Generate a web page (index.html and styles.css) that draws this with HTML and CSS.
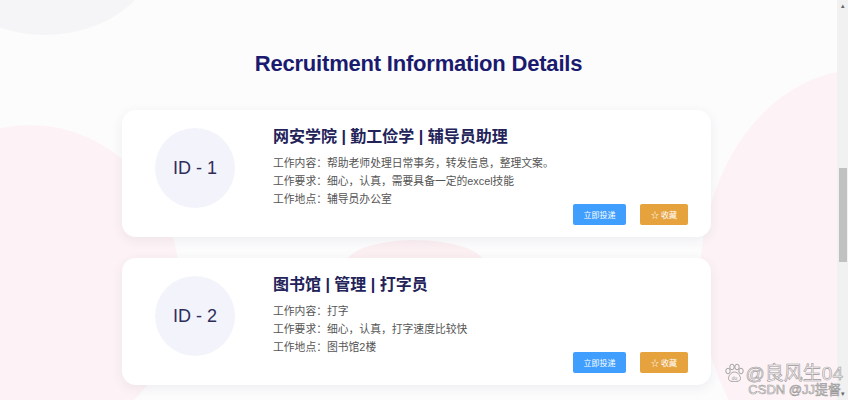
FILE: index.html
```html
<!DOCTYPE html>
<html lang="zh-CN">
<head>
    <meta charset="UTF-8">
    <meta name="viewport" content="width=device-width, initial-scale=1.0">
    <title>Recruitment Information Details</title>
    <link rel="stylesheet" href="styles.css">
</head>
<body>

    <div class="frame">
        <div class="page">
            <!-- фон -->
            <div class="blob blob-gray"></div>
            <div class="blob blob-left"></div>
            <div class="blob blob-mid"></div>
            <div class="blob blob-right"></div>

            <h2>Recruitment Information Details</h2>

            <div class="list">
                <div class="job-card">
                    <div class="job-id">ID - 1</div>
                    <div class="job-info">
                        <h3>网安学院 | 勤工俭学 | 辅导员助理</h3>
                        <p>工作内容：帮助老师处理日常事务，转发信息，整理文案。</p>
                        <p>工作要求：细心，认真，需要具备一定的excel技能</p>
                        <p>工作地点：辅导员办公室</p>
                    </div>
                    <div class="actions">
                        <button class="btn btn-apply">立即投递</button>
                        <button class="btn btn-fav">☆ 收藏</button>
                    </div>
                </div>

                <div class="job-card">
                    <div class="job-id">ID - 2</div>
                    <div class="job-info">
                        <h3>图书馆 | 管理 | 打字员</h3>
                        <p>工作内容：打字</p>
                        <p>工作要求：细心，认真，打字速度比较快</p>
                        <p>工作地点：图书馆2楼</p>
                    </div>
                    <div class="actions">
                        <button class="btn btn-apply">立即投递</button>
                        <button class="btn btn-fav">☆ 收藏</button>
                    </div>
                </div>
            </div>
        </div>

        <div class="scrollbar">
            <span class="arrow">▴</span>
            <div class="thumb"></div>
            <span class="arrow">▾</span>
        </div>
        <div class="edge"></div>

        <!-- водяний знак -->
        <div class="watermark">
            <div class="wm-main">
                <svg class="paw" width="20" height="20" viewBox="0 0 20 20" fill="none" stroke="#999" stroke-width="0.9">
                    <ellipse cx="4" cy="8" rx="2.2" ry="2.8"/>
                    <ellipse cx="8" cy="4" rx="2.2" ry="2.8"/>
                    <ellipse cx="13" cy="4" rx="2.2" ry="2.8"/>
                    <ellipse cx="17" cy="8" rx="2.2" ry="2.8"/>
                    <path d="M10.5 9 C7 9 4.5 13 4.5 15.5 C4.5 18 7 18.5 10.5 18.5 C14 18.5 16.5 18 16.5 15.5 C16.5 13 14 9 10.5 9 Z"/>
                    <text x="10.5" y="16.8" font-size="5" text-anchor="middle" fill="#999" stroke="none" font-family="Liberation Sans, sans-serif">du</text>
                </svg>
                <span>@良风生04</span>
            </div>
            <span class="wm-sub">CSDN @JJ提督</span>
        </div>
    </div>

</body>
</html>
```

FILE: styles.css
```css
body {
    margin: 0;
    font-family: "Liberation Sans", Arial, "Noto Sans CJK SC", sans-serif;
    background-color: #fff;
}

.frame {
    position: relative;
    display: grid;
    grid-template-columns: 837px 11px 8px;
    height: 400px;
    overflow: hidden;
}

.page {
    position: relative;
    overflow: hidden;
    background-color: #fcfcfd;
}

.blob {
    position: absolute;
    border-radius: 50%;
    z-index: 0;
}

.blob-gray {
    left: -70px;
    top: -150px;
    width: 230px;
    height: 185px;
    background-color: #f5f5f7;
}

.blob-left {
    left: -120px;
    top: 125px;
    width: 300px;
    height: 320px;
    background-color: #fdf3f6;
}

.blob-mid {
    left: 345px;
    top: 240px;
    width: 140px;
    height: 50px;
    background-color: #fbeff2;
}

.blob-right {
    left: 700px;
    top: 70px;
    width: 320px;
    height: 420px;
    background-color: #fdf3f6;
}

h2 {
    position: relative;
    z-index: 1;
    margin: 0;
    padding-top: 51px;
    text-align: center;
    font-size: 22px;
    line-height: 26px;
    color: #1a1a6e;
    letter-spacing: -0.2px;
}

.list {
    position: relative;
    z-index: 1;
    display: flex;
    flex-direction: column;
    gap: 21px;
    width: 589px;
    margin: 33px 0 0 122px;
}

.job-card {
    display: flex;
    align-items: flex-start;
    height: 127px;
    box-sizing: border-box;
    padding: 18px 23px 12px 33px;
    background-color: #fff;
    border-radius: 14px;
    box-shadow: 0 3px 12px rgba(60, 60, 90, 0.08);
}

.job-id {
    flex: none;
    width: 80px;
    height: 80px;
    border-radius: 50%;
    background-color: #f3f3fb;
    color: #2d2d5a;
    font-size: 18px;
    display: flex;
    align-items: center;
    justify-content: center;
}

.job-info {
    margin-left: 38px;
    flex: 1;
}

.job-info h3 {
    margin: -2px 0 6px;
    font-size: 16px;
    line-height: 22px;
    color: #23235a;
    font-weight: bold;
}

.job-info p {
    margin: 0;
    font-size: 10.8px;
    line-height: 18px;
    color: #555;
}

.actions {
    align-self: flex-end;
    display: flex;
    gap: 14px;
}

.btn {
    height: 21px;
    padding: 0 10px;
    border: none;
    border-radius: 2px;
    color: #fff;
    font-size: 8px;
    font-family: inherit;
}

.btn-apply {
    width: 53px;
    background-color: #409eff;
}

.btn-fav {
    width: 48px;
    background-color: #e6a23c;
}

.watermark {
    position: absolute;
    right: 13px;
    bottom: 4px;
    z-index: 2;
    display: flex;
    flex-direction: column;
    align-items: flex-end;
    color: transparent;
    -webkit-text-stroke: 0.6px #999;
    line-height: 1;
}

.wm-main {
    display: flex;
    align-items: center;
    gap: 2px;
    font-size: 19px;
}

.wm-sub {
    font-size: 13px;
    margin-right: 2px;
}

.scrollbar {
    display: flex;
    flex-direction: column;
    align-items: center;
    background-color: #f1f1f1;
    padding-top: 168px;
    position: relative;
}

.scrollbar .arrow {
    position: absolute;
    font-size: 7px;
    color: #666;
}

.scrollbar .arrow:first-child {
    top: 2px;
}

.scrollbar .arrow:last-child {
    bottom: 2px;
}

.thumb {
    width: 8px;
    height: 94px;
    background-color: #c1c1c1;
}

.edge {
    background-color: #fff;
}
```
